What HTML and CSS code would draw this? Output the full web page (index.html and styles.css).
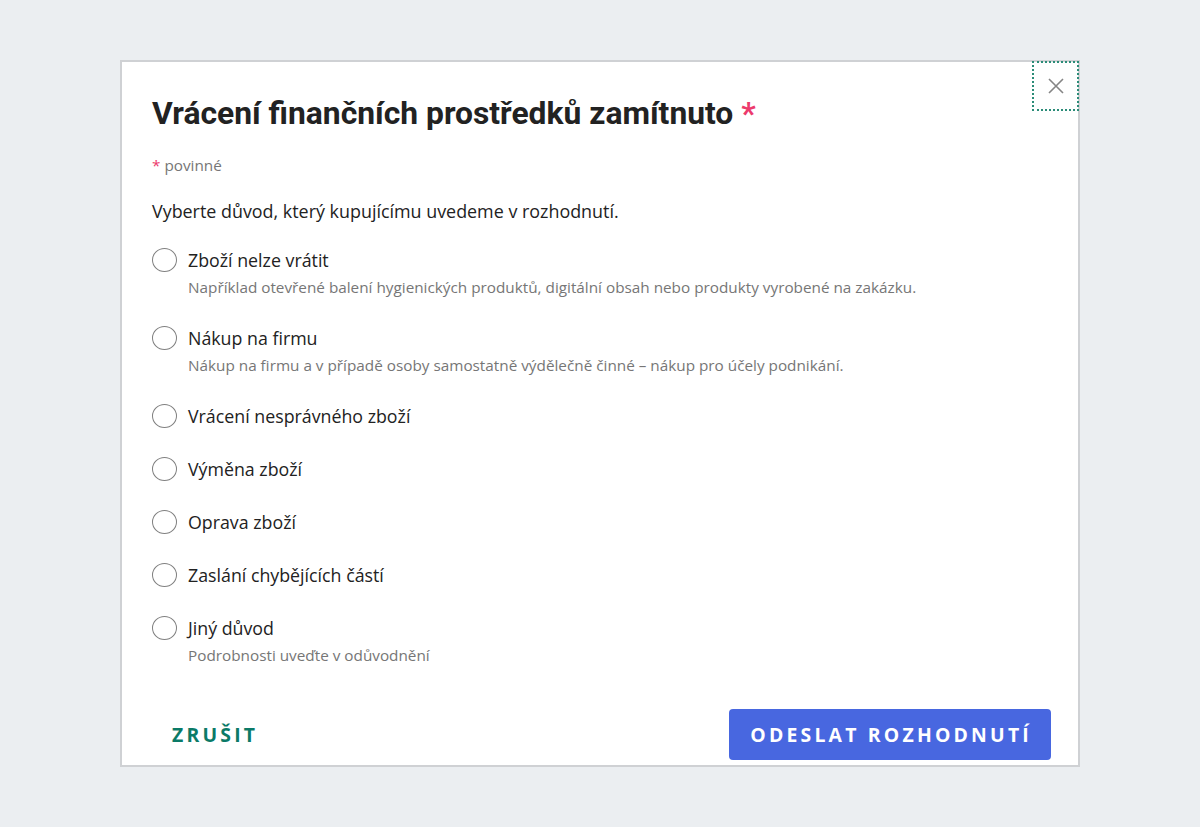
FILE: index.html
```html
<!DOCTYPE html>
<html lang="cs">
<head>
  <meta charset="UTF-8">
  <meta name="viewport" content="width=device-width, initial-scale=1.0">
  <title>Vrácení finančních prostředků zamítnuto</title>
  <link rel="stylesheet" href="styles.css">
</head>
<body>

  <div class="modal">
    <button class="close" aria-label="Zavřít">
      <svg width="16" height="16" viewBox="0 0 16 16"><path d="M1 1 L15 15 M15 1 L1 15" stroke="#858585" stroke-width="1.6" fill="none"/></svg>
    </button>

    <h1 class="title">Vrácení finančních prostředků zamítnuto <span class="req">*</span></h1>
    <div class="note"><span class="req">*</span> povinné</div>
    <p class="lead">Vyberte důvod, který kupujícímu uvedeme v rozhodnutí.</p>

    <div class="options">
      <label class="option">
        <span class="radio"></span>
        <span class="text">
          <span class="label">Zboží nelze vrátit</span>
          <span class="desc">Například otevřené balení hygienických produktů, digitální obsah nebo produkty vyrobené na zakázku.</span>
        </span>
      </label>
      <label class="option">
        <span class="radio"></span>
        <span class="text">
          <span class="label">Nákup na firmu</span>
          <span class="desc">Nákup na firmu a v případě osoby samostatně výdělečně činné – nákup pro účely podnikání.</span>
        </span>
      </label>
      <label class="option">
        <span class="radio"></span>
        <span class="text"><span class="label">Vrácení nesprávného zboží</span></span>
      </label>
      <label class="option">
        <span class="radio"></span>
        <span class="text"><span class="label">Výměna zboží</span></span>
      </label>
      <label class="option">
        <span class="radio"></span>
        <span class="text"><span class="label">Oprava zboží</span></span>
      </label>
      <label class="option">
        <span class="radio"></span>
        <span class="text"><span class="label">Zaslání chybějících částí</span></span>
      </label>
      <label class="option">
        <span class="radio"></span>
        <span class="text">
          <span class="label">Jiný důvod</span>
          <span class="desc">Podrobnosti uveďte v odůvodnění</span>
        </span>
      </label>
    </div>

    <div class="footer">
      <button class="btn-text">ZRUŠIT</button>
      <button class="btn-primary">ODESLAT ROZHODNUTÍ</button>
    </div>
  </div>

</body>
</html>
```

FILE: styles.css
```css
body {
  margin: 0;
  min-height: 100vh;
  background-color: #ebeef1;
  display: flex;
  align-items: center;
  justify-content: center;
  font-family: "Open Sans", sans-serif;
  color: #222;
}

.modal {
  position: relative;
  width: 960px;
  height: 707px;
  box-sizing: border-box;
  background: #fff;
  border: 2px solid #cfd1d4;
  padding: 33px 27px 5px 30px;
  display: flex;
  flex-direction: column;
}

.close {
  position: absolute;
  top: -1px;
  right: -1px;
  width: 47px;
  height: 50px;
  background: none;
  border: 2px dotted #2b8c78;
  padding: 0;
  display: flex;
  align-items: center;
  justify-content: center;
}

.title {
  margin: 0;
  font-family: Roboto, sans-serif;
  font-weight: bold;
  font-size: 31.8px;
  line-height: 36px;
  color: #222;
}

.req {
  color: #ec3a6c;
}

.note {
  margin-top: 24px;
  font-size: 15.3px;
  line-height: 20px;
  color: #767676;
}

.lead {
  margin: 24px 0 0;
  font-size: 17.9px;
  line-height: 24px;
}

/* Radio list */
.options {
  margin-top: 25px;
  display: flex;
  flex-direction: column;
  gap: 29px;
}

.option {
  display: flex;
  align-items: flex-start;
  gap: 11px;
}

.radio {
  flex: none;
  width: 25px;
  height: 24px;
  box-sizing: border-box;
  border: 1.5px solid #808080;
  border-radius: 50%;
}

.text {
  display: flex;
  flex-direction: column;
}

.label {
  font-size: 17.8px;
  line-height: 24px;
}

.desc {
  margin-top: 5px;
  font-size: 15.3px;
  line-height: 20px;
  color: #767676;
}

/* Footer buttons */
.footer {
  margin-top: auto;
  display: flex;
  justify-content: space-between;
  align-items: center;
}

.btn-text,
.btn-primary {
  font-family: "Open Sans", sans-serif;
  font-weight: bold;
  font-size: 19.4px;
  letter-spacing: 3.2px;
  border: none;
  cursor: pointer;
}

.btn-text {
  background: none;
  color: #0b7a67;
  padding: 0 20px;
  height: 51px;
}

.btn-primary {
  background: #4867e0;
  color: #fff;
  border-radius: 4px;
  height: 51px;
  padding: 0 19px 0 21px;
}
```
